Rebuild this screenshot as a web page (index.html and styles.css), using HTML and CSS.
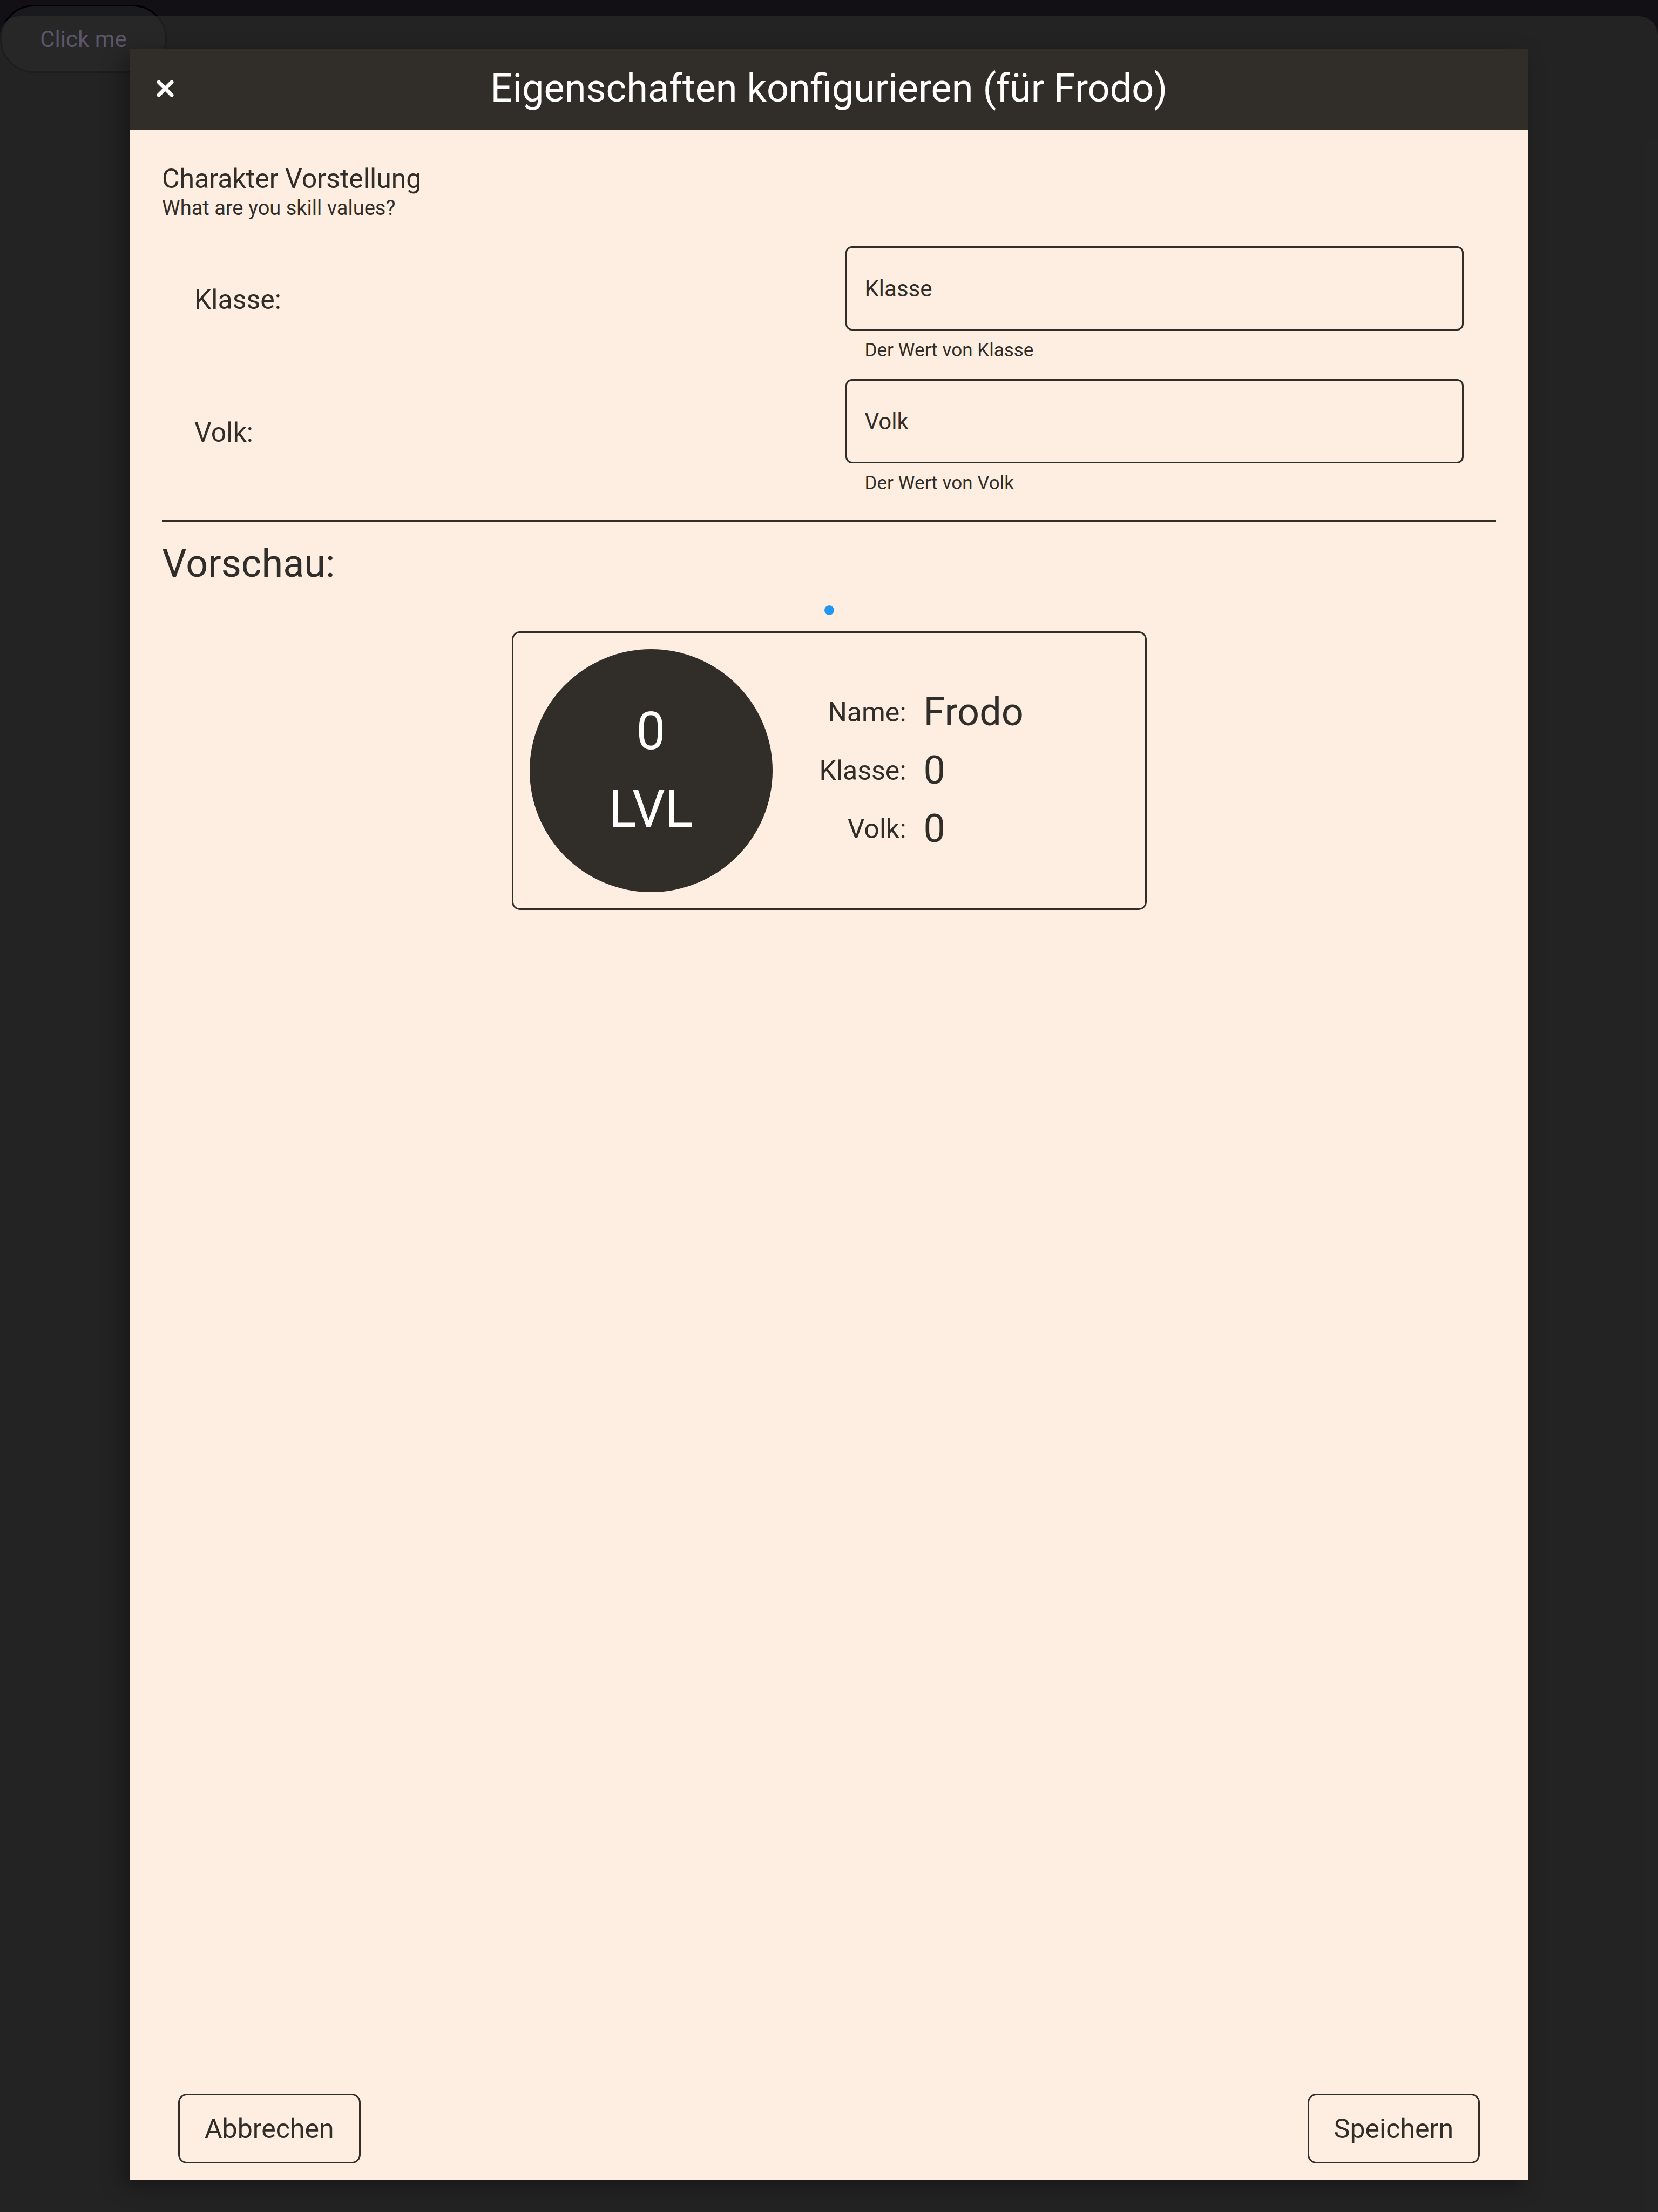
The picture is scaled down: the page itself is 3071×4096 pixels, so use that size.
FILE: index.html
```html
<!DOCTYPE html>
<html lang="de">
<head>
<meta charset="utf-8">
<title>Eigenschaften konfigurieren</title>
<link rel="stylesheet" href="styles.css">
</head>
<body>
<button class="launcher" type="button">Click me</button>
<div class="sheet">
  <main class="dialog" role="dialog" aria-labelledby="dialog-title">
    <header class="dialog-header">
      <button class="close" type="button" aria-label="Schließen">
        <svg class="close-icon" viewBox="0 0 32 32" aria-hidden="true"><path d="M4 4 28 28M28 4 4 28"/></svg>
      </button>
      <h1 class="dialog-title" id="dialog-title">Eigenschaften konfigurieren (für Frodo)</h1>
    </header>
    <form class="dialog-body">
      <h2 class="section-title">Charakter Vorstellung</h2>
      <p class="section-hint">What are you skill values?</p>
      <div class="fields">
        <div class="field">
          <label class="field-label" for="klasse">Klasse:</label>
          <div class="field-control">
            <input class="field-input" id="klasse" type="text" placeholder="Klasse">
            <p class="field-help">Der Wert von Klasse</p>
          </div>
        </div>
        <div class="field">
          <label class="field-label" for="volk">Volk:</label>
          <div class="field-control">
            <input class="field-input" id="volk" type="text" placeholder="Volk">
            <p class="field-help">Der Wert von Volk</p>
          </div>
        </div>
      </div>
      <hr class="divider">
      <h2 class="preview-title">Vorschau:</h2>
      <div class="page-dot"></div>
      <section class="card">
        <div class="level"><span>0</span><span>LVL</span></div>
        <dl class="stats">
          <dt>Name:</dt><dd>Frodo</dd>
          <dt>Klasse:</dt><dd>0</dd>
          <dt>Volk:</dt><dd>0</dd>
        </dl>
      </section>
      <footer class="actions">
        <button class="action" type="button">Abbrechen</button>
        <button class="action" type="submit">Speichern</button>
      </footer>
    </form>
  </main>
</div>
</body>
</html>
```
FILE: styles.css
```css
* {
  box-sizing: border-box;
  margin: 0;
  padding: 0;
}

:root {
  --ink: #312e2a;
  --paper: #fdeee1;
}

body {
  min-height: 100vh;
  padding-top: 30px;
  display: flex;
  background: #121015;
  color: var(--ink);
  font-family: Roboto, sans-serif;
  font-size: 50px;
}

button,
input {
  color: inherit;
  font: inherit;
  background: none;
  border: 0;
}

h1,
h2 {
  font-weight: 400;
}

/* Button of the page that lies under the sheet */
.launcher {
  position: absolute;
  top: 9px;
  left: 0;
  width: 309px;
  height: 126px;
  border: 3px solid #000;
  border-radius: 63px;
  background: #1a191d;
  color: #9b8ec3;
  font-size: 42px;
}

.sheet {
  position: relative;
  flex: 1;
  display: flex;
  padding: 60px 240px;
  border-radius: 36px 36px 0 0;
  background: rgba(48, 49, 47, 0.6);
}

.dialog {
  flex: 1;
  display: flex;
  flex-direction: column;
  background: var(--paper);
  box-shadow: -12px 12px 36px rgba(0, 0, 0, 0.35);
}

.dialog-header {
  display: grid;
  grid-template-columns: 132px 1fr 132px;
  align-items: center;
  height: 150px;
  padding-bottom: 2px;
  background: var(--ink);
  color: #fff;
}

.close {
  display: grid;
  place-items: center;
  height: 132px;
}

.close-icon {
  width: 32px;
  height: 32px;
  fill: none;
  stroke: currentColor;
  stroke-width: 7;
  stroke-linecap: round;
}

.dialog-title {
  font-size: 72px;
  line-height: 84px;
  text-align: center;
}

.dialog-body {
  flex: 1;
  display: flex;
  flex-direction: column;
  padding: 61px 60px 30px;
}

.section-title {
  font-size: 50px;
  line-height: 60px;
}

.section-hint {
  font-size: 38px;
  line-height: 48px;
}

.fields {
  padding: 23px 60px 0;
}

.field {
  display: grid;
  grid-template-columns: 1fr 1fr;
  gap: 60px;
  align-items: center;
  height: 246px;
}

.field-control {
  padding-top: 24px;
  height: 246px;
}

.field-input {
  display: block;
  width: 100%;
  height: 156px;
  padding: 0 33px;
  border: 3px solid var(--ink);
  border-radius: 12px;
  font-size: 42px;
}

.field-input::placeholder {
  color: inherit;
  opacity: 1;
}

.field-help {
  margin-top: 17px;
  padding: 0 36px;
  font-size: 35px;
  line-height: 40px;
}

.divider {
  margin: 39px 0 36px;
  border: 0;
  border-top: 3px solid var(--ink);
}

.preview-title {
  font-size: 72px;
  line-height: 84px;
}

.page-dot {
  align-self: center;
  width: 18px;
  height: 18px;
  margin: 35px 0 30px;
  border-radius: 50%;
  background: #2196f3;
}

.card {
  align-self: center;
  display: flex;
  align-items: center;
  gap: 84px;
  width: 1176px;
  padding: 30px;
  border: 3px solid var(--ink);
  border-radius: 15px;
}

.level {
  display: flex;
  flex-direction: column;
  align-items: center;
  justify-content: center;
  width: 450px;
  height: 450px;
  padding-bottom: 2px;
  border-radius: 50%;
  background: var(--ink);
  color: #fff;
  font-size: 96px;
  line-height: 144px;
}

.stats {
  display: grid;
  grid-template-columns: 164px 1fr;
  column-gap: 32px;
  align-items: center;
  line-height: 108px;
}

.stats dt {
  text-align: right;
}

.stats dd {
  font-size: 72px;
}

.actions {
  display: flex;
  justify-content: space-between;
  margin-top: auto;
  padding: 0 30px;
}

.action {
  height: 129px;
  padding: 0 46px;
  border: 3px solid var(--ink);
  border-radius: 16px;
}
```
